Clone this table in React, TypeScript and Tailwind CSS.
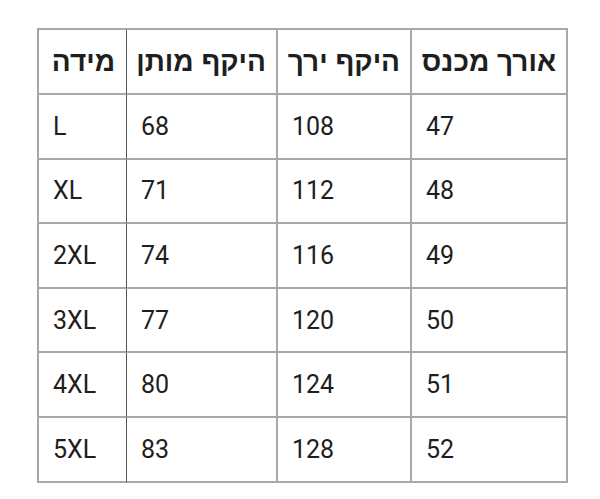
import React from "react";

const rows = [
  ["L", "68", "108", "47"],
  ["XL", "71", "112", "48"],
  ["2XL", "74", "116", "49"],
  ["3XL", "77", "120", "50"],
  ["4XL", "80", "124", "51"],
  ["5XL", "83", "128", "52"],
];

const headers = ["מידה", "היקף מותן", "היקף ירך", "אורך מכנס"];
const widths = ["w-[88px]", "w-[151px]", "w-[134px]", "w-[156px]"];

export default function App() {
  return (
    <div className="w-[600px] h-[499px] bg-white overflow-hidden pt-[28px] pl-[37px]">
      <table className="border-separate border-spacing-0 border-t-2 border-l-2 border-[#a8a8a8] text-[#1e1e1e]">
        <thead>
          <tr className="h-[65px]">
            {headers.map((h, i) => (
              <th
                key={i}
                dir="rtl"
                className={`${widths[i]} p-0 pr-[12px] text-right align-middle border-b-2 border-[#a8a8a8] font-bold text-[28px] leading-none whitespace-nowrap ${
                  i === 0 ? "border-r border-r-[#555555]" : "border-r-2 border-r-[#a8a8a8]"
                }`}
                style={{ fontFamily: '"Liberation Sans", "Open Sans", sans-serif' }}
              >
                {h}
              </th>
            ))}
          </tr>
        </thead>
        <tbody>
          {rows.map((r, ri) => (
            <tr key={ri} className="h-[64.6px]">
              {r.map((c, i) => (
                <td
                  key={i}
                  className={`p-0 pl-[14px] text-left align-middle border-b-2 border-[#a8a8a8] text-[25px] leading-none ${
                    i === 0 ? "border-r border-r-[#555555]" : "border-r-2 border-r-[#a8a8a8]"
                  }`}
                  style={{ fontFamily: 'Roboto, "Liberation Sans", sans-serif' }}
                >
                  {c}
                </td>
              ))}
            </tr>
          ))}
        </tbody>
      </table>
    </div>
  );
}
